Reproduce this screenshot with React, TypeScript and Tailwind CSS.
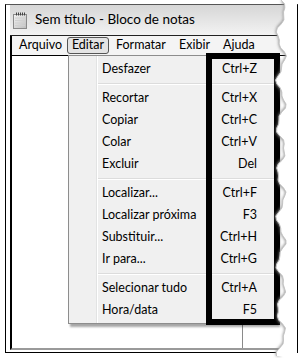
import React from "react";

type Item = { label: string; key: string } | "sep";

const items: Item[] = [
  { label: "Desfazer", key: "Ctrl+Z" },
  "sep",
  { label: "Recortar", key: "Ctrl+X" },
  { label: "Copiar", key: "Ctrl+C" },
  { label: "Colar", key: "Ctrl+V" },
  { label: "Excluir", key: "Del" },
  "sep",
  { label: "Localizar...", key: "Ctrl+F" },
  { label: "Localizar próxima", key: "F3" },
  { label: "Substituir...", key: "Ctrl+H" },
  { label: "Ir para...", key: "Ctrl+G" },
  "sep",
  { label: "Selecionar tudo", key: "Ctrl+A" },
  { label: "Hora/data", key: "F5" },
];

function NotepadIcon() {
  return (
    <svg width="14" height="17" viewBox="0 0 14 17">
      <defs>
        <linearGradient id="pg" x1="0" y1="0" x2="1" y2="1">
          <stop offset="0" stopColor="#f4f4f4" />
          <stop offset="1" stopColor="#bdbdbd" />
        </linearGradient>
      </defs>
      <rect x="0.5" y="2.5" width="13" height="14" fill="url(#pg)" stroke="#8a8a8a" />
      {[3, 5, 7, 9, 11].map((x) => (
        <rect key={x} x={x} y="0.5" width="1" height="3" fill="#444" />
      ))}
      {[6, 8.5, 11, 13.5].map((y) => (
        <line key={y} x1="2" y1={y} x2="12" y2={y} stroke="#d0d0d0" strokeWidth="1" />
      ))}
    </svg>
  );
}

// torn paper edge on the right
function TornEdge() {
  const pts: string[] = [];
  for (let y = 0; y <= 358; y += 4) {
    const x = 14 + 4 * Math.sin((y * 2 * Math.PI) / 46) + 1.5 * Math.sin((y * 2 * Math.PI) / 17);
    pts.push(`${x.toFixed(1)},${y}`);
  }
  const line = "M" + pts.join(" L");
  const fill = line + " L30,358 L30,0 Z";
  return (
    <svg width="30" height="358" viewBox="0 0 30 358" className="absolute right-[5px] top-0">
      <defs>
        <filter id="bl" x="-50%" y="-5%" width="200%" height="110%">
          <feGaussianBlur stdDeviation="1.8" />
        </filter>
      </defs>
      <path d={line} fill="none" stroke="#8f8f8f" strokeWidth="5" filter="url(#bl)" transform="translate(2,0)" />
      <path d={fill} fill="#ffffff" />
      <path d={line} fill="none" stroke="#c4c4c4" strokeWidth="1" />
    </svg>
  );
}

export default function App() {
  return (
    <div className="relative w-[302px] h-[358px] overflow-hidden bg-white pt-[4px] pl-[5px] pr-[4px] pb-[5px] font-['Lato',sans-serif] text-black">
      <div className="flex h-full flex-col border border-t-[#555] border-black pl-[4px] pb-[2px]">
        {/* title bar */}
        <div className="flex h-[30px] items-center gap-[8px] bg-gradient-to-b from-[#d6d6d6] to-[#f3f3f3] pl-[3px]">
          <NotepadIcon />
          <span className="text-[13.5px] leading-none">Sem título - Bloco de notas</span>
        </div>
        <div className="h-px bg-[#222]" />
        {/* menu bar */}
        <div className="flex h-[19px] items-center border-l-2 border-black bg-[#f4f4f4] text-[12.5px] leading-none">
          <span className="w-[55px] pl-[7px]">Arquivo</span>
          <span className="flex h-[17px] w-[42px] items-center justify-center rounded-[3px] border border-[#555] bg-[#e4e4e4]">
            Editar
          </span>
          <span className="w-[70px] pl-[7px]">Formatar</span>
          <span className="w-[44px]">Exibir</span>
          <span>Ajuda</span>
        </div>
        {/* client area */}
        <div className="relative flex-1 border-l-2 border-t border-black border-b-2 border-b-[#9a9a9a] bg-white">
          <div className="absolute left-[230px] bottom-0 h-[24px] w-px bg-[#8a8a8a]" />
        </div>
      </div>

      {/* Edit dropdown */}
      <div className="absolute left-[68px] top-[55px] w-[210px] border border-[#8d8d8d] bg-[#f0f0f0] py-[2px] text-[12.5px] leading-none shadow-[2px_3px_2px_rgba(0,0,0,0.35)]">
        <div className="absolute left-[27px] top-0 bottom-0 w-px bg-[#e2e3e3]" />
        <div className="absolute left-[28px] top-0 bottom-0 w-px bg-white" />
        {items.map((it, i) =>
          it === "sep" ? (
            <div key={i} className="flex h-[7px] flex-col justify-center pl-[29px]">
              <div className="h-px bg-[#dcdcdc]" />
              <div className="h-px bg-white" />
            </div>
          ) : (
            <div key={i} className="flex h-[22px] items-center justify-between pl-[33px] pr-[20px]">
              <span>{it.label}</span>
              <span>{it.key}</span>
            </div>
          ),
        )}
      </div>

      {/* annotation box around shortcuts */}
      <div className="absolute left-[206px] top-[53px] h-[272px] w-[74px] border-[6px] border-black" />

      <TornEdge />
    </div>
  );
}
